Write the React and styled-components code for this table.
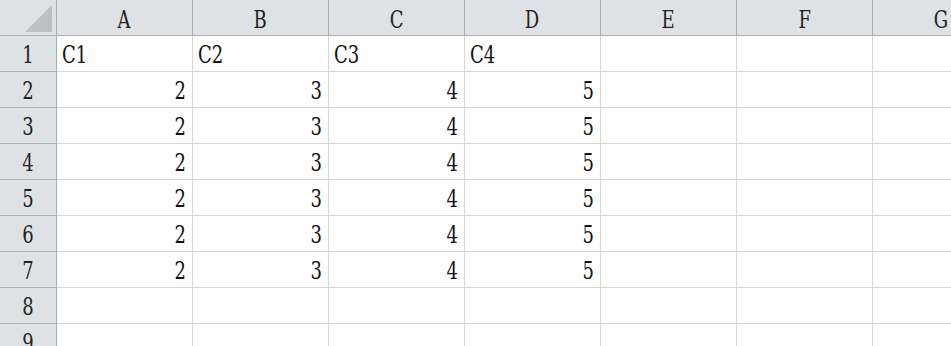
import React from "react";
import styled, { createGlobalStyle } from "styled-components";

const Global = createGlobalStyle`
  html, body { margin: 0; padding: 0; background: #fff; overflow: hidden; }
  body { font-family: "DejaVu Serif", serif; }
`;

const Sheet = styled.div`
  width: 951px;
  height: 346px;
  overflow: hidden;
  display: grid;
  grid-template-columns: 57px repeat(7, 136px);
  grid-auto-rows: 36px;
  font-family: "DejaVu Serif", serif;
  font-size: 25px;
  color: #111;
`;

const Glyphs = styled.span`
  display: inline-block;
  transform: scaleX(0.72);
  transform-origin: ${(p) => p.$origin || "center"} bottom;
`;

const Corner = styled.div`
  position: relative;
  background: #dfe2e5;
  border-right: 1px solid #a9abae;
  border-bottom: 1px solid #a9abae;
  &::after {
    content: "";
    position: absolute;
    left: 25px;
    top: 5px;
    width: 27px;
    height: 27px;
    background: #bcc0c3;
    clip-path: polygon(100% 0, 100% 100%, 0 100%);
  }
`;

const ColHead = styled.div`
  background: #dfe2e5;
  border-right: 1px solid #a9abae;
  border-bottom: 1px solid #a9abae;
  display: flex;
  align-items: flex-end;
  justify-content: center;
  padding-bottom: 3px;
  line-height: 1;
  color: #222;
`;

const RowHead = styled.div`
  background: #dfe2e5;
  border-right: 1px solid #a9abae;
  border-bottom: 1px solid #a9abae;
  display: flex;
  align-items: flex-end;
  justify-content: center;
  padding-bottom: 4px;
  line-height: 1;
  color: #222;
`;

const Cell = styled.div`
  border-right: 1px solid #d6d6d6;
  border-bottom: 1px solid #d6d6d6;
  display: flex;
  align-items: flex-end;
  justify-content: ${(p) => (p.$num ? "flex-end" : "flex-start")};
  padding: 0 6px 4px 5px;
  line-height: 1;
  white-space: nowrap;
`;

const cols = ["A", "B", "C", "D", "E", "F", "G"];
const rows = [
  ["C1", "C2", "C3", "C4"],
  [2, 3, 4, 5],
  [2, 3, 4, 5],
  [2, 3, 4, 5],
  [2, 3, 4, 5],
  [2, 3, 4, 5],
  [2, 3, 4, 5],
  [],
  [],
];

export default function App() {
  return (
    <>
      <Global />
      <Sheet>
        <Corner />
        {cols.map((c) => (
          <ColHead key={c}>
            <Glyphs>{c}</Glyphs>
          </ColHead>
        ))}
        {rows.map((r, i) => (
          <React.Fragment key={i}>
            <RowHead>
              <Glyphs>{i + 1}</Glyphs>
            </RowHead>
            {cols.map((c, j) => {
              const v = r[j];
              const num = typeof v === "number";
              return (
                <Cell key={c} $num={num}>
                  {v !== undefined && (
                    <Glyphs $origin={num ? "right" : "left"}>{v}</Glyphs>
                  )}
                </Cell>
              );
            })}
          </React.Fragment>
        ))}
      </Sheet>
    </>
  );
}
